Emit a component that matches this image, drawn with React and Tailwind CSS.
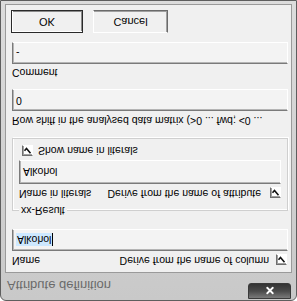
import { X } from 'lucide-react';

function Check({ checked = true }) {
  return (
    <span className="inline-flex h-[11px] w-[11px] shrink-0 items-center justify-center border-t border-l border-t-[#6e6e6e] border-l-[#6e6e6e] border-b border-r border-b-white border-r-white bg-white shadow-[inset_1px_1px_0_#a0a0a0]">
      {checked && (
        <svg width="9" height="9" viewBox="0 0 9 9">
          <path d="M1.5 4.2 L3.5 6.5 L7.5 1.8" fill="none" stroke="#111" strokeWidth="1.6" />
        </svg>
      )}
    </span>
  );
}

function Field({ children, className = '' }) {
  return (
    <div className={`flex h-[22px] items-center border border-t-[#7a7a7a] border-l-[#7a7a7a] border-b-white border-r-white bg-[#f3f3f3] pl-[3px] shadow-[inset_1px_1px_0_#b5b5b5] ${className}`}>
      {children}
    </div>
  );
}

export default function App() {
  return (
    <div className="h-[301px] w-[297px] -scale-y-100 overflow-hidden whitespace-nowrap bg-white font-['Liberation_Sans',Arial,sans-serif] text-[10.5px] text-black">
      <div className="flex h-full flex-col rounded-t-[6px] border border-[#5e5e5e] bg-gradient-to-b from-[#c9c9c9] to-[#dcdcdc]">
        {/* title bar */}
        <div className="flex h-[27px] shrink-0 items-start justify-between">
          <span className="pl-[6px] pt-[8px] text-[13px] leading-[14px] text-[#6a6a6a]">Attribute definition</span>
          <div className="mr-[5px] mt-px flex h-[16px] w-[43px] items-center justify-center rounded-b-[3px] border border-[#3a3a3a] bg-gradient-to-b from-[#7a7a7a] via-[#4a4a4a] to-[#343434]">
            <X className="h-[11px] w-[12px] text-white" strokeWidth={4} />
          </div>
        </div>

        {/* body */}
        <div className="mx-[4px] mb-[3px] flex flex-1 flex-col border border-[#9a9a9a] bg-[#f0f0f0] pl-[6px] pr-[3px]">
          <div className="mt-[6px] flex h-[12px] items-center justify-between pr-[1px]">
            <span>Name</span>
            <span className="flex items-center gap-[7px]">
              Derive from the name of column
              <Check />
            </span>
          </div>
          <Field className="mt-[3px]">
            <span className="bg-[#cde8ff] px-px leading-[13px]">Alkohol</span>
            <span className="h-[13px] w-px bg-black" />
          </Field>

          {/* group box */}
          <div className="relative mt-[18px] h-[73px] border border-[#cfcfcf] px-[6px] shadow-[inset_1px_1px_0_white,1px_1px_0_white]">
            <span className="absolute -top-[7px] left-[6px] bg-[#f0f0f0] px-[2px] leading-[12px]">xx-Result</span>
            <div className="mt-[11px] flex h-[12px] items-center justify-between">
              <span>Name in literals</span>
              <span className="flex items-center gap-[9px]">
                Derive from the name of attribute
                <Check />
              </span>
            </div>
            <Field className="mt-[3px] h-[24px]">
              <span className="leading-[13px]">Alkohol</span>
            </Field>
            <div className="mt-[2px] flex items-center gap-[5px] pl-[3px]">
              <Check />
              <span>Show name in literals</span>
            </div>
          </div>

          <div className="mt-[11px] h-[12px] leading-[12px]">Row shift in the analysed data matrix (&gt;0 ... fwd; &lt;0 ...</div>
          <Field className="mt-[4px]">
            <span>0</span>
          </Field>

          <div className="mt-[10px] h-[12px] leading-[12px]">Comment</div>
          <Field className="mt-[3px]">
            <span>-</span>
          </Field>

          <div className="mt-[9px] flex gap-[10px]">
            <button className="-ml-px flex h-[23px] w-[72px] items-center justify-center border border-[#2a2a2a] bg-[#f0f0f0] text-[11px] shadow-[inset_1px_1px_0_white,inset_-1px_-1px_0_#8a8a8a]">
              OK
            </button>
            <button className="flex h-[23px] w-[75px] items-center justify-center border border-b-[#6a6a6a] border-r-[#6a6a6a] border-t-white border-l-white bg-[#f0f0f0] text-[11px] shadow-[inset_-1px_-1px_0_#a0a0a0]">
              Cancel
            </button>
          </div>
        </div>
      </div>
    </div>
  );
}
